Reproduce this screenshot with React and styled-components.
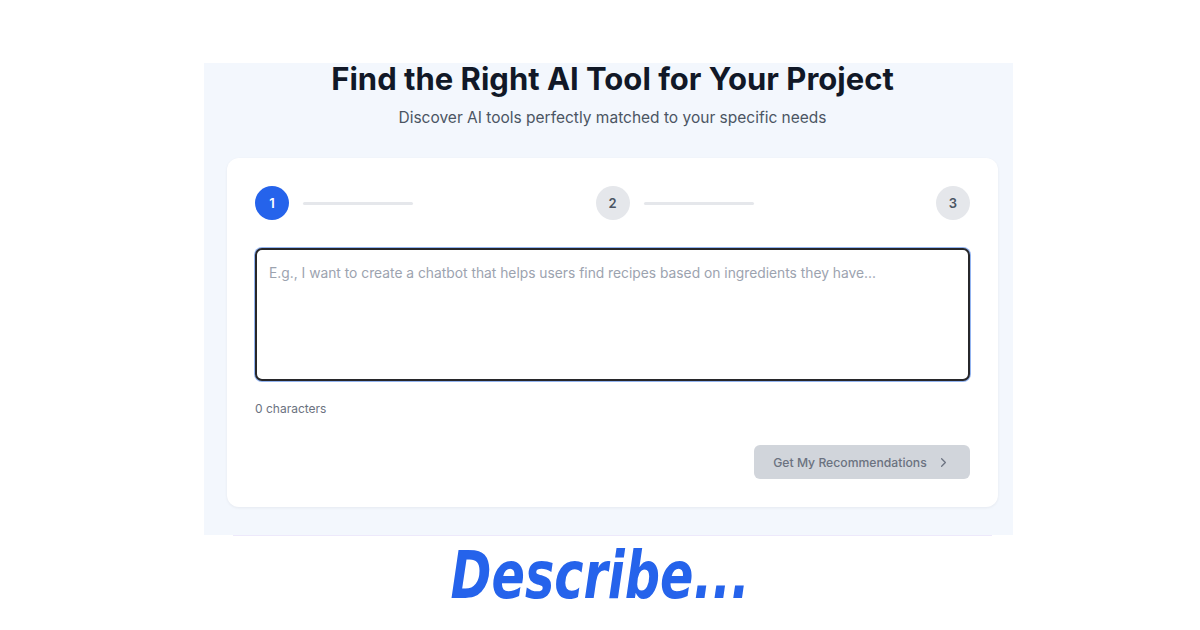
import React from "react";
import styled, { createGlobalStyle } from "styled-components";

const GlobalStyle = createGlobalStyle`
  * { box-sizing: border-box; }
  body {
    margin: 0;
    background: #fff;
    font-family: Inter, "Noto Sans", sans-serif;
  }
`;

const steps = [1, 2, 3];

const App = () => {
  return (
    <Page>
      <GlobalStyle />
      <Shot>
        <Title>Find the Right AI Tool for Your Project</Title>
        <SubTitle>Discover AI tools perfectly matched to your specific needs</SubTitle>
        <Card>
          <Stepper>
            {steps.map((n, i) => (
              <Step key={n}>
                <Circle $active={i === 0}>{n}</Circle>
                {i < steps.length - 1 && <StepLine />}
              </Step>
            ))}
          </Stepper>
          <TextArea placeholder="E.g., I want to create a chatbot that helps users find recipes based on ingredients they have..." />
          <Counter>0 characters</Counter>
          <Actions>
            <Button disabled>
              Get My Recommendations
              <svg width="15" height="15" viewBox="0 0 24 24" fill="none" stroke="currentColor" strokeWidth="2" strokeLinecap="round" strokeLinejoin="round">
                <path d="m9 18 6-6-6-6" />
              </svg>
            </Button>
          </Actions>
        </Card>
      </Shot>
      <Divider />
      <Caption>Describe...</Caption>
    </Page>
  );
};

export default App;

const Page = styled.div`
  width: 1200px;
  height: 630px;
  padding-top: 63px;
  overflow: hidden;
  display: flex;
  flex-direction: column;
  align-items: center;
`;

const Shot = styled.section`
  width: 809px;
  margin-left: 17px;
  background: #f3f7fd;
  padding: 0 15px 28px 23px;
  display: flex;
  flex-direction: column;
  align-items: center;
`;

const Title = styled.h1`
  margin: 0;
  color: #111827;
  font-size: 31px;
  font-weight: 700;
  line-height: 32px;
`;

const SubTitle = styled.p`
  margin: 11px 0 0;
  color: #4b5563;
  font-size: 15.5px;
  line-height: 24px;
`;

const Card = styled.div`
  width: 771px;
  margin-top: 28px;
  background: #fff;
  border-radius: 12px;
  box-shadow: 0 1px 3px rgba(15, 23, 42, 0.06);
  padding: 28px;
  display: flex;
  flex-direction: column;
`;

const Stepper = styled.div`
  display: flex;
  justify-content: space-between;
  align-items: center;
`;

const Step = styled.div`
  display: flex;
  align-items: center;
  gap: 14px;
`;

const Circle = styled.div`
  width: 34px;
  height: 34px;
  border-radius: 50%;
  display: flex;
  align-items: center;
  justify-content: center;
  font-size: 13px;
  font-weight: 600;
  background: ${(p) => (p.$active ? "#2563eb" : "#e5e7eb")};
  color: ${(p) => (p.$active ? "#fff" : "#4b5563")};
`;

const StepLine = styled.div`
  width: 110px;
  height: 3px;
  border-radius: 2px;
  background: #e5e7eb;
`;

const TextArea = styled.textarea`
  margin-top: 28px;
  width: 100%;
  height: 133px;
  resize: none;
  border: 2px solid #27272a;
  border-radius: 7px;
  box-shadow: 0 0 0 1px #93b4f0;
  padding: 13px 12px;
  font-family: Inter, "Noto Sans", sans-serif;
  font-size: 13.8px;
  line-height: 20px;
  outline: none;
  &::placeholder {
    color: #9ca3af;
  }
`;

const Counter = styled.div`
  margin-top: 20px;
  color: #6b7280;
  font-size: 12px;
  line-height: 16px;
`;

const Actions = styled.div`
  margin-top: 28px;
  display: flex;
  justify-content: flex-end;
`;

const Button = styled.button`
  width: 216px;
  height: 34px;
  border: none;
  border-radius: 6px;
  background: #d1d5db;
  color: #6b7280;
  font-family: Inter, "Noto Sans", sans-serif;
  font-size: 12.2px;
  font-weight: 500;
  display: flex;
  align-items: center;
  justify-content: center;
  gap: 9px;
`;

const Divider = styled.div`
  width: 759px;
  margin-left: 25px;
  height: 1px;
  background: #ede9fb;
`;

const Caption = styled.div`
  margin-top: 7px;
  color: #2563eb;
  font-family: "DejaVu Sans Condensed", "DejaVu Sans", sans-serif;
  font-weight: 700;
  font-style: italic;
  font-size: 66px;
  line-height: 66px;
  transform: scaleX(0.83);
`;
